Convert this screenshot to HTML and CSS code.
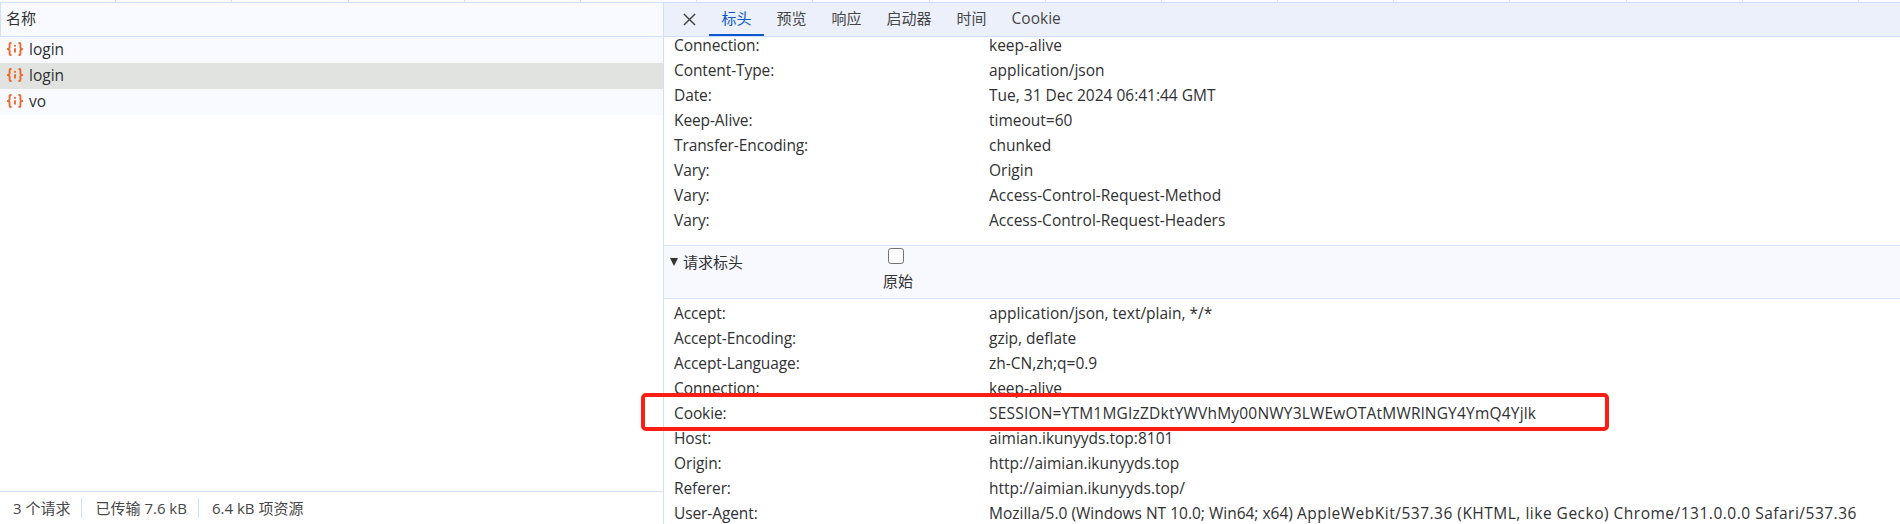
FILE: index.html
```html
<!DOCTYPE html>
<html>

<head>
    <title>Network</title>
    <link rel="stylesheet" href="styles.css">
</head>

<body>
    <div class="top-strip">
        <i></i><i></i><i></i><i></i><i></i><i></i><i></i><i></i><i></i><i></i><i></i><i></i><i></i><i></i><i></i><i></i>
    </div>

    <div class="main">
        <!-- request list -->
        <div class="left-panel">
            <div class="list-head">名称</div>
            <div class="req-row">
                <svg class="req-icon" viewBox="0 0 16 14"><path d="M4.5 1H3.6Q2.6 1 2.6 2V5.2Q2.6 6.4 1 7Q2.6 7.6 2.6 8.8V12Q2.6 13 3.6 13H4.5M11.5 1H12.4Q13.4 1 13.4 2V5.2Q13.4 6.4 15 7Q13.4 7.6 13.4 8.8V12Q13.4 13 12.4 13H11.5M8 6.2V10.5" /><circle cx="8" cy="3.8" r="1.1" /></svg>
                <span>login</span>
            </div>
            <div class="req-row selected">
                <svg class="req-icon" viewBox="0 0 16 14"><path d="M4.5 1H3.6Q2.6 1 2.6 2V5.2Q2.6 6.4 1 7Q2.6 7.6 2.6 8.8V12Q2.6 13 3.6 13H4.5M11.5 1H12.4Q13.4 1 13.4 2V5.2Q13.4 6.4 15 7Q13.4 7.6 13.4 8.8V12Q13.4 13 12.4 13H11.5M8 6.2V10.5" /><circle cx="8" cy="3.8" r="1.1" /></svg>
                <span>login</span>
            </div>
            <div class="req-row">
                <svg class="req-icon" viewBox="0 0 16 14"><path d="M4.5 1H3.6Q2.6 1 2.6 2V5.2Q2.6 6.4 1 7Q2.6 7.6 2.6 8.8V12Q2.6 13 3.6 13H4.5M11.5 1H12.4Q13.4 1 13.4 2V5.2Q13.4 6.4 15 7Q13.4 7.6 13.4 8.8V12Q13.4 13 12.4 13H11.5M8 6.2V10.5" /><circle cx="8" cy="3.8" r="1.1" /></svg>
                <span>vo</span>
            </div>
            <div class="list-space"></div>
            <div class="status-bar">
                <span class="status-item">3 个请求</span>
                <span class="status-item">已传输 7.6 kB</span>
                <span class="status-item">6.4 kB 项资源</span>
            </div>
        </div>

        <!-- headers panel -->
        <div class="right-panel">
            <div class="tabs">
                <svg class="close-icon" viewBox="0 0 14 14"><path d="M1 1L13 13M13 1L1 13" /></svg>
                <span class="tab active">标头</span>
                <span class="tab">预览</span>
                <span class="tab">响应</span>
                <span class="tab">启动器</span>
                <span class="tab">时间</span>
                <span class="tab tab-latin">Cookie</span>
            </div>
            <div class="headers">
                <div class="hdr-row"><span class="hdr-name">Connection:</span><span>keep-alive</span></div>
                <div class="hdr-row"><span class="hdr-name">Content-Type:</span><span>application/json</span></div>
                <div class="hdr-row"><span class="hdr-name">Date:</span><span>Tue, 31 Dec 2024 06:41:44 GMT</span></div>
                <div class="hdr-row"><span class="hdr-name">Keep-Alive:</span><span>timeout=60</span></div>
                <div class="hdr-row"><span class="hdr-name">Transfer-Encoding:</span><span>chunked</span></div>
                <div class="hdr-row"><span class="hdr-name">Vary:</span><span>Origin</span></div>
                <div class="hdr-row"><span class="hdr-name">Vary:</span><span>Access-Control-Request-Method</span></div>
                <div class="hdr-row"><span class="hdr-name">Vary:</span><span>Access-Control-Request-Headers</span></div>

                <div class="section-head">
                    <div class="section-title"><span class="arrow"></span>请求标头</div>
                    <label class="raw-check"><span class="check-box"></span><span class="raw-label">原始</span></label>
                </div>

                <div class="hdr-row"><span class="hdr-name">Accept:</span><span>application/json, text/plain, */*</span></div>
                <div class="hdr-row"><span class="hdr-name">Accept-Encoding:</span><span>gzip, deflate</span></div>
                <div class="hdr-row"><span class="hdr-name">Accept-Language:</span><span>zh-CN,zh;q=0.9</span></div>
                <div class="hdr-row"><span class="hdr-name">Connection:</span><span>keep-alive</span></div>
                <div class="hdr-row"><span class="hdr-name">Cookie:</span><span class="cookie-val">SESSION=YTM1MGIzZDktYWVhMy00NWY3LWEwOTAtMWRlNGY4YmQ4Yjlk</span></div>
                <div class="hdr-row"><span class="hdr-name">Host:</span><span>aimian.ikunyyds.top:8101</span></div>
                <div class="hdr-row"><span class="hdr-name">Origin:</span><span>http://aimian.ikunyyds.top</span></div>
                <div class="hdr-row"><span class="hdr-name">Referer:</span><span>http://aimian.ikunyyds.top/</span></div>
                <div class="hdr-row"><span class="hdr-name">User-Agent:</span><span>Mozilla/5.0 (Windows NT 10.0; Win64; x64) <span class="ua-tail">AppleWebKit/537.36 (KHTML, like Gecko) Chrome/131.0.0.0 Safari/537.36</span></span></div>
            </div>
        </div>
    </div>

    <!-- red annotation drawn over the screenshot -->
    <div class="red-box"></div>
</body>

</html>
```

FILE: styles.css
```css
/* Basic styling */
body {
    margin: 0;
    height: 524px;
    overflow: hidden;
    position: relative;
    background: #fff;
    color: #303133;
    font-family: "Open Sans", "Noto Sans CJK SC", sans-serif;
    font-size: 15px;
    box-sizing: border-box;
}

/* Ticks along the top edge */
.top-strip {
    height: 3px;
    box-sizing: border-box;
    border-bottom: 1px solid #cfe0fb;
    display: flex;
}

.top-strip i {
    width: 116.2px;
    box-sizing: border-box;
    border-right: 1px solid #d8e3f5;
}

.main {
    display: flex;
    height: 521px;
}

/* Request list */
.left-panel {
    width: 663px;
    display: flex;
    flex-direction: column;
    flex-shrink: 0;
}

.list-head {
    height: 34px;
    line-height: 30px;
    padding-left: 5px;
    box-sizing: border-box;
    background: #f9faff;
    border-left: 1px solid #cfe0fb;
    border-bottom: 1px solid #cfe0fb;
}

.req-row {
    height: 26px;
    box-sizing: border-box;
    display: flex;
    align-items: center;
    padding: 0 0 2px 7px;
    background: #f9faff;
    font-size: 15.5px;
}

.req-row.selected {
    background: #e1e3e0;
}

.req-icon {
    width: 16px;
    height: 14px;
    margin-right: 6px;
    fill: none;
    stroke: #ee6a2c;
    stroke-width: 1.9;
}

.req-icon circle {
    fill: #ee6a2c;
    stroke: none;
}

.list-space {
    flex: 1;
}

/* Status bar */
.status-bar {
    height: 32px;
    border-top: 1px solid #cfe0fb;
    display: flex;
    align-items: center;
    color: #474747;
}

.status-item {
    padding: 0 11px 0 13px;
    border-right: 1px solid #cfe0fb;
    line-height: 20px;
}

.status-item:last-child {
    border-right: none;
}

/* Details panel */
.right-panel {
    flex: 1;
    min-width: 0;
    border-left: 1px solid #cfe0fb;
    display: flex;
    flex-direction: column;
}

.tabs {
    height: 34px;
    flex-shrink: 0;
    box-sizing: border-box;
    background: #ecf0fa;
    border-bottom: 1px solid #cfe0fb;
    display: flex;
    align-items: center;
    color: #474747;
}

.close-icon {
    width: 13px;
    height: 13px;
    margin: 0 13px 0 19px;
    fill: none;
    stroke: #444;
    stroke-width: 1.6;
}

.tab {
    height: 33px;
    line-height: 30px;
    padding: 0 12.5px;
    box-sizing: border-box;
}

.tab.active {
    color: #0b57d0;
    border-bottom: 2px solid #0b57d0;
}

.tab-latin {
    font-size: 15.5px;
}

.headers {
    flex: 1;
    font-size: 15.5px;
}

.hdr-row {
    height: 25px;
    line-height: 17px;
    padding-left: 10px;
    display: flex;
    white-space: nowrap;
}

.hdr-name {
    width: 315px;
    flex-shrink: 0;
    letter-spacing: -0.1px;
}

.cookie-val {
    letter-spacing: 0.2px;
}

.ua-tail {
    letter-spacing: 0.5px;
}

/* Request headers section */
.section-head {
    margin: 8px 0 6px;
    height: 54px;
    box-sizing: border-box;
    background: #f8f9ff;
    border-top: 1px solid #d5e3fb;
    border-bottom: 1px solid #d5e3fb;
    display: flex;
    font-size: 15px;
}

.section-title {
    width: 196px;
    padding-left: 6px;
    padding-top: 6px;
    line-height: 20px;
    display: flex;
    align-items: center;
    height: 20px;
}

.arrow {
    width: 0;
    height: 0;
    border-left: 4.5px solid transparent;
    border-right: 4.5px solid transparent;
    border-top: 8px solid #333;
    margin-right: 5px;
}

.raw-check {
    display: flex;
    flex-direction: column;
    align-items: center;
    width: 60px;
}

.check-box {
    width: 14px;
    height: 14px;
    margin: 2px 0 6px;
    border: 1px solid #767676;
    border-radius: 3px;
    background: #fff;
}

.raw-label {
    margin-left: 4px;
}

/* Red annotation */
.red-box {
    position: absolute;
    left: 641px;
    top: 393px;
    width: 968px;
    height: 38px;
    box-sizing: border-box;
    border: 4px solid #fa1e14;
    border-radius: 5px;
}
```
